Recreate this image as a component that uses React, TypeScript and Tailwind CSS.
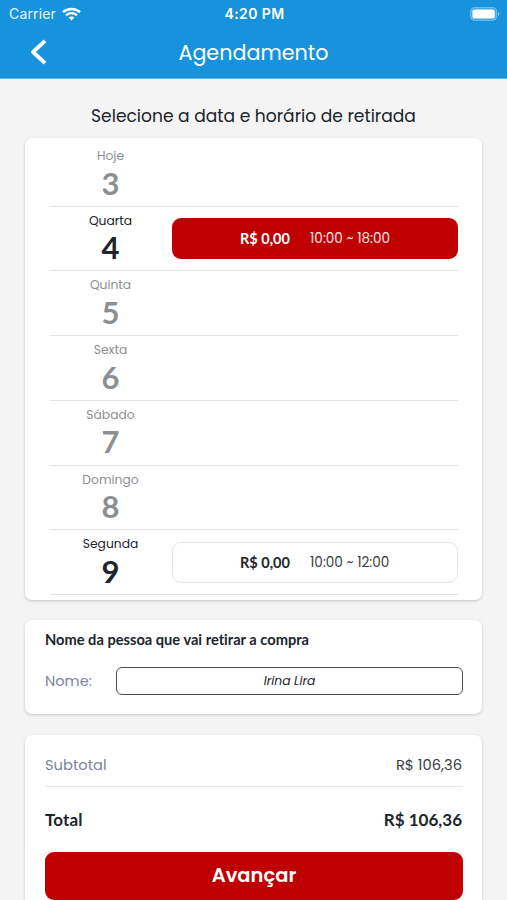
interface Slot {
  price: string;
  hours: string;
  selected?: boolean;
}

interface Day {
  label: string;
  number: number;
  slot?: Slot;
}

const days: Day[] = [
  { label: 'Hoje', number: 3 },
  {
    label: 'Quarta',
    number: 4,
    slot: { price: 'R$ 0,00', hours: '10:00 ~ 18:00', selected: true },
  },
  { label: 'Quinta', number: 5 },
  { label: 'Sexta', number: 6 },
  { label: 'Sábado', number: 7 },
  { label: 'Domingo', number: 8 },
  {
    label: 'Segunda',
    number: 9,
    slot: { price: 'R$ 0,00', hours: '10:00 ~ 12:00' },
  },
];

function StatusBar() {
  return (
    <div className="grid h-7 grid-cols-3 items-center pl-[9px] pr-[7px] font-[Inter,sans-serif] text-[14px] leading-[28px]">
      <div className="flex items-center gap-1.5">
        <span className="tracking-[0.15px] text-white/90">Carrier</span>
        <svg width="19" height="14" viewBox="0 0 19 14" fill="none" stroke="currentColor">
          <path d="M1 5.2C5.7.8 13.3.8 18 5.2" strokeWidth="2.5" />
          <path d="M4 8.3c3.1-2.9 7.9-2.9 11 0" strokeWidth="2.3" />
          <path d="M6.7 10.6c1.6-1.5 4-1.5 5.6 0L9.5 13.5Z" fill="currentColor" stroke="none" />
        </svg>
      </div>
      <span className="text-center font-semibold tracking-[0.4px]">4:20 PM</span>
      <svg className="justify-self-end" width="30" height="14" viewBox="0 0 30 14">
        <rect x="0.6" y="0.6" width="26" height="12.8" rx="4" fill="#fff" fillOpacity="0.2" stroke="#fff" strokeOpacity="0.35" />
        <rect x="2.4" y="2.4" width="22.4" height="9.2" rx="2.2" fill="#fff" />
        <path d="M28 4.8v4.4c1.8-.7 1.8-3.7 0-4.4Z" fill="#fff" fillOpacity="0.5" />
      </svg>
    </div>
  );
}

function Header() {
  return (
    <header className="h-[79px] shrink-0 border-b border-[#5fb9ec] bg-[#1693dc] text-white">
      <StatusBar />
      <div className="grid h-[48px] grid-cols-[60px_1fr_60px] items-center">
        <button aria-label="Voltar" className="pl-[29px]">
          <svg width="19" height="28" viewBox="0 0 19 28" fill="none" stroke="currentColor" strokeWidth="3.8" strokeLinejoin="round">
            <path d="M16 2.8 4 14l12 11.2" />
          </svg>
        </button>
        <h1 className="pt-[2px] text-center text-[20.7px]">Agendamento</h1>
      </div>
    </header>
  );
}

function SlotButton({ slot }: { slot: Slot }) {
  return (
    <button
      className={
        slot.selected
          ? 'mt-[11.5px] flex h-[41px] w-full items-center rounded-[9px] bg-[#c00000] pt-px pl-[68px] text-white'
          : 'mt-[11.5px] flex h-[41px] w-full items-center rounded-[9px] border border-[#e4e5e6] pt-px pl-[67px] text-[#20242b]'
      }
    >
      <span className="w-[70px] text-left font-[Lato,sans-serif] text-[14.5px] font-bold">{slot.price}</span>
      <span className={slot.selected ? 'text-[13.6px] text-white/90' : 'text-[13.6px] text-[#3a3d42]'}>
        {slot.hours}
      </span>
    </button>
  );
}

function DayRow({ day }: { day: Day }) {
  return (
    <li className="flex h-[64.7px] border-b border-[#e4e4e5]">
      <div
        className={
          day.slot
            ? 'flex w-[121px] shrink-0 flex-col items-center text-[#20242b]'
            : 'flex w-[121px] shrink-0 flex-col items-center text-[#8c8f92]'
        }
      >
        <span className="mt-[5px] text-[12.3px] leading-[18px]">{day.label}</span>
        <span className="mt-[1.5px] font-[Lato,sans-serif] text-[31px] leading-[32px] font-bold">{day.number}</span>
      </div>
      <div className="flex-1 pl-px">{day.slot && <SlotButton slot={day.slot} />}</div>
    </li>
  );
}

export default function App() {
  return (
    <div className="flex h-[900px] w-[507px] flex-col overflow-hidden bg-[#f4f4f5] font-[Poppins,Inter,sans-serif] text-[#20242b]">
      <Header />
      <main className="flex flex-col px-[25px]">
        <h2 className="mt-6 text-center text-[17.1px] leading-[26px]">
          Selecione a data e horário de retirada
        </h2>

        <ul className="mt-[9px] h-[462px] rounded-[7px] bg-white pr-6 pl-[25px] pt-[4.1px] shadow-[0_1px_3px_rgba(0,0,0,0.2)]">
          {days.map((day) => (
            <DayRow key={day.number} day={day} />
          ))}
        </ul>

        <section className="mt-5 h-[94px] rounded-[7px] bg-white pr-[19px] pl-5 pt-[10px] shadow-[0_1px_3px_rgba(0,0,0,0.2)]">
          <h3 className="font-[Lato,sans-serif] text-[14.65px] leading-[20px] font-bold [font-variant-ligatures:none]">
            Nome da pessoa que vai retirar a compra
          </h3>
          <div className="mt-[17px] flex items-center">
            <span className="w-[71px] pt-[2px] text-[14.6px] text-[#7d849b]">Nome:</span>
            <div className="flex h-[28px] flex-1 items-center justify-center rounded-[6px] border-[1.5px] border-[#4b4d52] pt-px text-[12.3px] italic">
              Irina Lira
            </div>
          </div>
        </section>

        <section className="mt-[21px] h-[190px] rounded-[7px] bg-white pr-[19px] pl-5 shadow-[0_1px_3px_rgba(0,0,0,0.2)]">
          <div className="flex h-[52px] items-center justify-between border-b border-[#e6e8ec] pr-px pt-[9px] text-[14.7px]">
            <span className="text-[#7d849b]">Subtotal</span>
            <span className="text-[#3a3d42]">R$ 106,36</span>
          </div>
          <div className="flex h-[65px] items-center justify-between pr-px font-[Lato,sans-serif] text-[17px] font-bold">
            <span className="tracking-[0.15px]">Total</span>
            <span>R$ 106,36</span>
          </div>
          <button className="h-[48px] w-full rounded-[9px] bg-[#c00000] text-[19.5px] font-semibold text-white">
            Avançar
          </button>
        </section>
      </main>
    </div>
  );
}
